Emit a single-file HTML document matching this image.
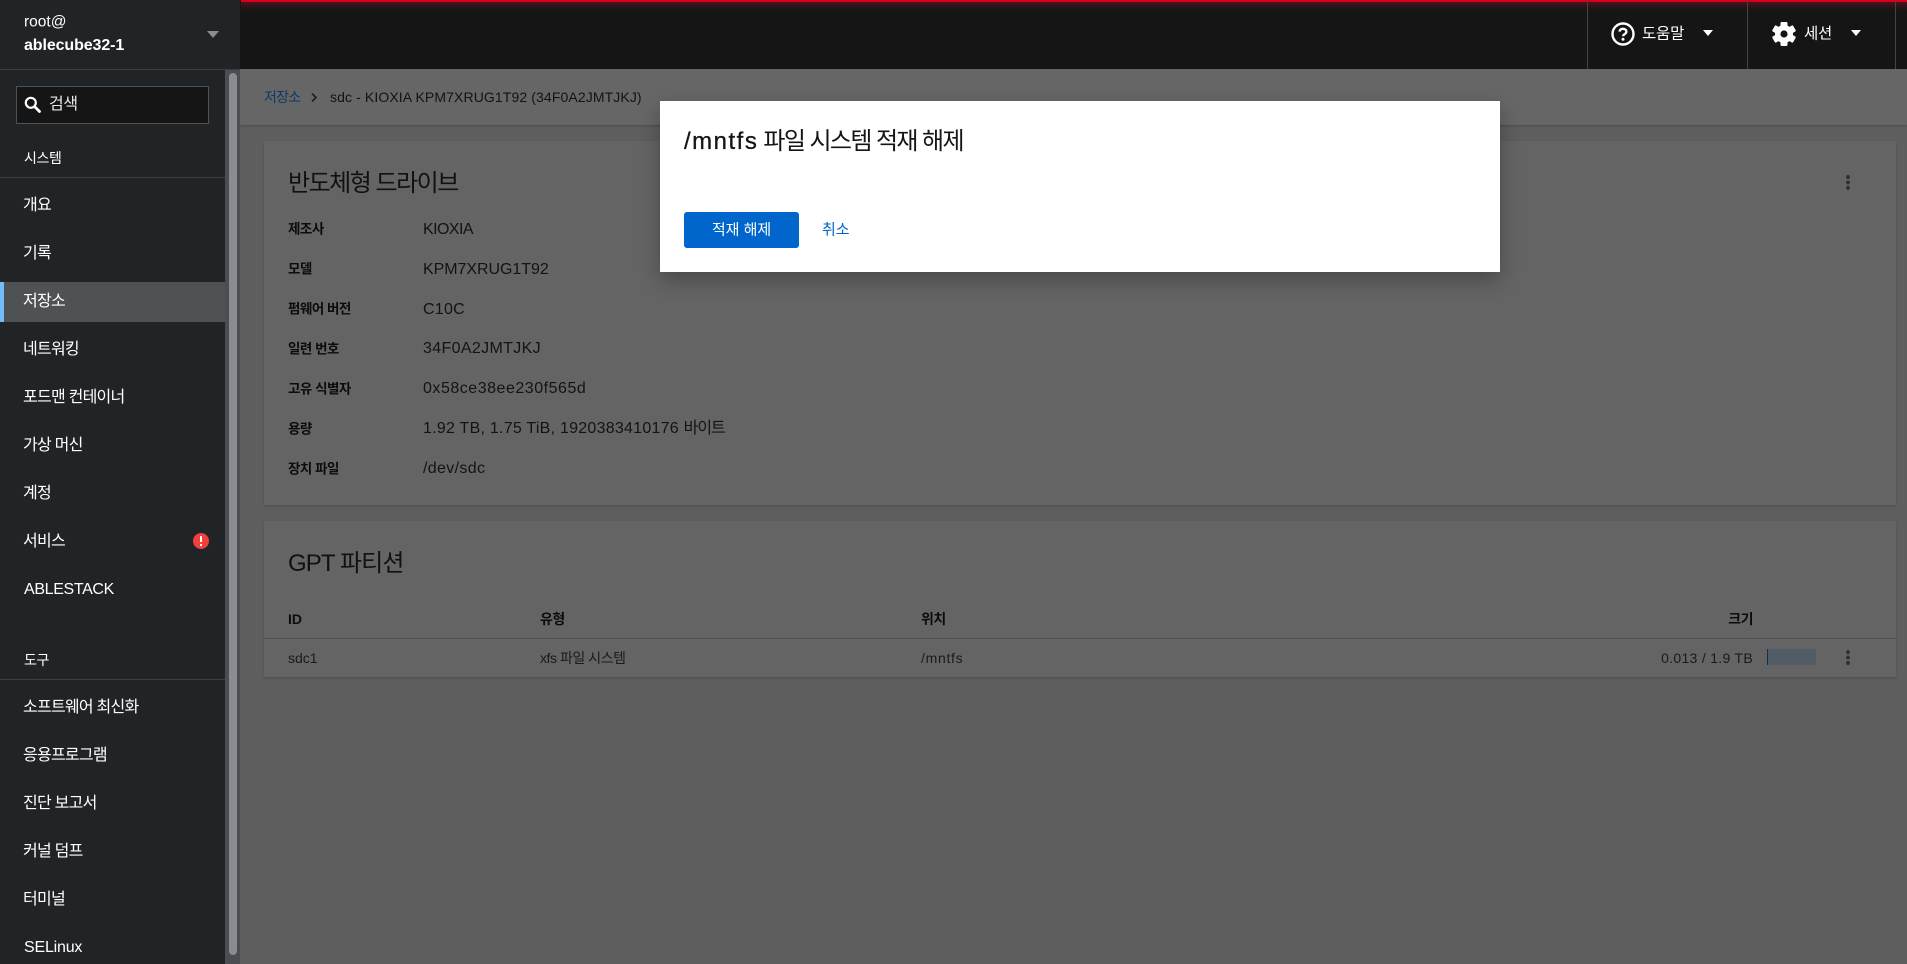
<!DOCTYPE html>
<html lang="ko"><head><meta charset="utf-8"><title>저장소</title>
<style>
html,body{margin:0;padding:0;width:1907px;height:964px;overflow:hidden;background:#5e5e5e}
body{font-family:"Liberation Sans","Noto Sans CJK KR",sans-serif;position:relative;color:#151515}
.a{position:absolute;white-space:nowrap}
.c{transform:translateY(-50%);line-height:1}
.nav{left:23px;font-size:16px;color:#fff;letter-spacing:-.75px}
.dt{left:288px;font-size:13.5px;font-weight:700;color:#0c0c0c;letter-spacing:-.5px}
.dd{left:423px;font-size:16px;color:#131313}
.card{background:#646464;box-shadow:0 1px 2px rgba(0,0,0,.18)}
.kebab{width:4px;height:4px;background:#303030;border-radius:50%;box-shadow:0 5.5px 0 #303030,0 11px 0 #303030}
</style></head><body>
<!-- main -->
<div class="a" style="left:240px;top:69px;width:1667px;height:56px;background:#666;box-shadow:0 1px 2px rgba(0,0,0,.2)"></div>
<div class="a c" style="left:264px;top:97px;font-size:14px;color:#0b3a63;letter-spacing:-.8px">저장소</div>
<svg class="a" style="left:310px;top:92px" width="8" height="11" viewBox="0 0 8 11"><path d="M2 1.500L6 5.500L2 9.500" fill="none" stroke="#222" stroke-width="1.800"/></svg>
<div class="a c" style="left:330px;top:97px;font-size:14px;color:#131313;letter-spacing:.11px">sdc - KIOXIA KPM7XRUG1T92 (34F0A2JMTJKJ)</div>
<div class="a card" style="left:264px;top:141px;width:1632px;height:364px"></div>
<div class="a c" style="left:288px;top:184px;font-size:24px;color:#111;letter-spacing:-1.5px">반도체형 드라이브</div>
<div class="a kebab" style="left:1846px;top:175px"></div>
<div class="a dt c" style="top:229px">제조사</div><div class="a dd c" style="top:230px;letter-spacing:-.55px">KIOXIA</div>
<div class="a dt c" style="top:269px">모델</div><div class="a dd c" style="top:270px;letter-spacing:-.05px">KPM7XRUG1T92</div>
<div class="a dt c" style="top:309px">펌웨어 버전</div><div class="a dd c" style="top:310px;letter-spacing:.25px">C10C</div>
<div class="a dt c" style="top:349px">일련 번호</div><div class="a dd c" style="top:349px;letter-spacing:.35px">34F0A2JMTJKJ</div>
<div class="a dt c" style="top:389px">고유 식별자</div><div class="a dd c" style="top:389px;letter-spacing:.52px">0x58ce38ee230f565d</div>
<div class="a dt c" style="top:429px">용량</div><div class="a dd c" style="top:429px;letter-spacing:.25px">1.92 TB, 1.75 TiB, 1920383410176 <span style="letter-spacing:-1px">바이트</span></div>
<div class="a dt c" style="top:469px">장치 파일</div><div class="a dd c" style="top:469px;letter-spacing:.35px">/dev/sdc</div>
<div class="a card" style="left:264px;top:521px;width:1632px;height:156px"></div>
<div class="a c" style="left:288px;top:564px;font-size:24px;color:#111;letter-spacing:-.9px">GPT 파티션</div>
<div class="a c" style="left:288px;top:619px;font-size:14px;font-weight:700;color:#0c0c0c">ID</div>
<div class="a c" style="left:540px;top:619px;font-size:14px;font-weight:700;color:#0c0c0c;letter-spacing:-.5px">유형</div>
<div class="a c" style="left:921px;top:619px;font-size:14px;font-weight:700;color:#0c0c0c;letter-spacing:-.5px">위치</div>
<div class="a c" style="right:154px;top:619px;font-size:14px;font-weight:700;color:#0c0c0c;letter-spacing:-.5px">크기</div>
<div class="a" style="left:264px;top:638px;width:1632px;height:1px;background:#4f4f4f"></div>
<div class="a c" style="left:288px;top:658px;font-size:14px;color:#1a1a1a">sdc1</div>
<div class="a c" style="left:540px;top:658px;font-size:14px;color:#1a1a1a;letter-spacing:-.45px">xfs 파일 시스템</div>
<div class="a c" style="left:921px;top:658px;font-size:14px;color:#1a1a1a;letter-spacing:.7px">/mntfs</div>
<div class="a c" style="right:154px;top:658px;font-size:14px;color:#1a1a1a;letter-spacing:.3px">0.013 / 1.9 TB</div>
<div class="a" style="left:1767px;top:649px;width:49px;height:16px;background:#525c66"></div>
<div class="a" style="left:1767px;top:649px;width:1px;height:16px;background:#0a3257"></div>
<div class="a kebab" style="left:1846px;top:650px"></div>
<!-- topbar -->
<div class="a" style="left:240px;top:0;width:1667px;height:69px;background:#151515"></div>
<div class="a" style="left:241px;top:0;width:1666px;height:2px;background:#d7001c"></div>
<div class="a" style="left:241px;top:2px;width:1666px;height:8px;background:linear-gradient(#4a1218,#151515)"></div>
<div class="a" style="left:1587px;top:0;width:1px;height:69px;background:#444"></div>
<div class="a" style="left:1747px;top:0;width:1px;height:69px;background:#444"></div>
<div class="a" style="left:1895px;top:0;width:1px;height:69px;background:#444"></div>
<svg class="a" style="left:1611px;top:22px" width="24" height="24" viewBox="0 0 24 24"><circle cx="12" cy="12" r="10.500" fill="none" stroke="#fff" stroke-width="2.400"/><path d="M8.600 9.600C8.800 7.600 10.200 6.800 12 6.800C13.900 6.800 15.400 7.900 15.400 9.700C15.400 11.900 12.100 12.100 12.100 14.200" fill="none" stroke="#fff" stroke-width="2.300"/><circle cx="12" cy="17.200" r="1.500" fill="#fff"/></svg>
<div class="a c" style="left:1642px;top:34px;font-size:15.500px;color:#fff;letter-spacing:-.2px">도움말</div>
<svg class="a" style="left:1703px;top:30px" width="10" height="6"><path d="M0 0H10L5 6Z" fill="#fff"/></svg>
<svg class="a" style="left:1772px;top:22px" width="24" height="24" viewBox="0 0 24 24"><g fill="#fff"><rect x="8.500" y="0" width="7" height="24" rx="1.200"/><rect x="8.500" y="0" width="7" height="24" rx="1.200" transform="rotate(60 12 12)"/><rect x="8.500" y="0" width="7" height="24" rx="1.200" transform="rotate(120 12 12)"/><circle cx="12" cy="12" r="9"/></g><circle cx="12" cy="12" r="3.600" fill="#151515"/></svg>
<div class="a c" style="left:1804px;top:34px;font-size:15.500px;color:#fff;letter-spacing:-.2px">세션</div>
<svg class="a" style="left:1851px;top:30px" width="10" height="6"><path d="M0 0H10L5 6Z" fill="#fff"/></svg>
<!-- sidebar -->
<div class="a" style="left:0;top:0;width:240px;height:964px;background:#212427"></div>
<div class="a" style="left:0;top:69px;width:240px;height:1px;background:#3c3f42"></div>
<div class="a" style="left:225px;top:70px;width:15px;height:894px;background:#4a4e52"></div>
<div class="a" style="left:229px;top:73px;width:8px;height:882px;background:#8a8d90;border-radius:4px"></div>
<div class="a c" style="left:24px;top:22px;font-size:15.500px;color:#fff">root@</div>
<div class="a c" style="left:24px;top:46px;font-size:16px;font-weight:700;color:#fff;letter-spacing:-.1px">ablecube32-1</div>
<svg class="a" style="left:207px;top:31px" width="12" height="7"><path d="M0 0H12L6 7Z" fill="#8a8d90"/></svg>
<div class="a" style="left:16px;top:86px;width:191px;height:36px;background:#151515;border:1px solid #4f5255"></div>
<svg class="a" style="left:24px;top:96px" width="17" height="17" viewBox="0 0 17 17"><circle cx="6.800" cy="6.800" r="5" fill="none" stroke="#fff" stroke-width="2.200"/><path d="M10.500 10.500L15.500 15.500" stroke="#fff" stroke-width="2.800" stroke-linecap="round"/></svg>
<div class="a c" style="left:49px;top:105px;font-size:16px;color:#e8e8e8;letter-spacing:-.4px">검색</div>
<div class="a c nav" style="left:24px;top:158px;font-size:14px;letter-spacing:-.4px">시스템</div>
<div class="a" style="left:0;top:177px;width:225px;height:1px;background:#3c3f42"></div>
<div class="a" style="left:0;top:282px;width:225px;height:40px;background:#4f5255"></div>
<div class="a" style="left:0;top:282px;width:4px;height:40px;background:#73bcf7"></div>
<div class="a c nav" style="left:23px;top:206px">개요</div>
<div class="a c nav" style="left:23px;top:254px">기록</div>
<div class="a c nav" style="left:23px;top:302px">저장소</div>
<div class="a c nav" style="left:23px;top:350px">네트워킹</div>
<div class="a c nav" style="left:23px;top:398px">포드맨 컨테이너</div>
<div class="a c nav" style="left:23px;top:446px">가상 머신</div>
<div class="a c nav" style="left:23px;top:494px">계정</div>
<div class="a c nav" style="left:23px;top:542px">서비스</div>
<div class="a" style="left:193px;top:533px;width:16px;height:16px;background:#f0403c;border-radius:50%"></div>
<div class="a" style="left:200px;top:536px;width:2px;height:6px;background:#fff"></div>
<div class="a" style="left:200px;top:544px;width:2px;height:2px;background:#fff"></div>
<div class="a c nav" style="left:24px;top:590px;letter-spacing:-.35px">ABLESTACK</div>
<div class="a c nav" style="left:24px;top:660px;font-size:14px;letter-spacing:-.4px">도구</div>
<div class="a" style="left:0;top:679px;width:225px;height:1px;background:#3c3f42"></div>
<div class="a c nav" style="left:23px;top:708px">소프트웨어 최신화</div>
<div class="a c nav" style="left:23px;top:756px">응용프로그램</div>
<div class="a c nav" style="left:23px;top:804px">진단 보고서</div>
<div class="a c nav" style="left:23px;top:852px">커널 덤프</div>
<div class="a c nav" style="left:23px;top:900px">터미널</div>
<div class="a c nav" style="left:24px;top:948px;letter-spacing:-.2px">SELinux</div>
<!-- modal -->
<div class="a" style="left:660px;top:101px;width:840px;height:171px;background:#fff;box-shadow:0 8px 20px rgba(0,0,0,.28)"></div>
<div class="a c" style="left:684px;top:142px;font-size:24px;color:#151515;letter-spacing:-1.600px"><span style="letter-spacing:1.500px;-webkit-text-stroke:.3px #151515">/mntfs</span> 파일 시스템 적재 해제</div>
<div class="a" style="left:684px;top:212px;width:115px;height:36px;background:#06c;border-radius:3px"></div>
<div class="a c" style="left:684px;top:229.500px;width:115px;text-align:center;font-size:15px;color:#fff">적재 해제</div>
<div class="a c" style="left:822px;top:230px;font-size:15px;color:#06c">취소</div>
</body></html>
